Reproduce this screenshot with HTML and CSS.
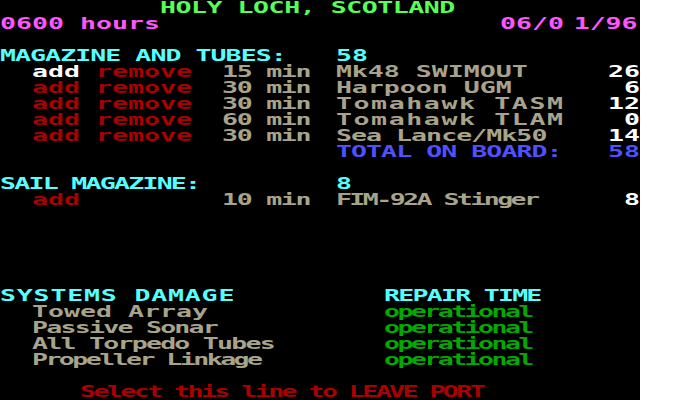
FILE: index.html
```html
<!DOCTYPE html>
<html>
<head>
<meta charset="utf-8">
<link rel="stylesheet" href="styles.css">
</head>
<body>
<div class="screen">
  <div class="text">
    <div class="row title-row"><span class="c-green">HOLY LOCH, SCOTLAND</span></div>
    <div class="row split">
      <span class="c-magenta">0600 hours</span>
      <span class="c-magenta">06/0<span class="gap">1</span>/96</span>
    </div>

    <section class="block">
      <div class="row head21"><span class="c-cyan mag">MAGAZINE AND TUBES:</span><span class="c-cyan">58</span></div>
      <div class="row inv"><span></span><span class="c-white">add</span><span class="c-red">remove</span><span class="c-khaki time">15 min</span><span class="c-khaki item">Mk48 SWIMOUT</span><span class="c-white num">26</span></div>
      <div class="row inv"><span></span><span class="c-red">add</span><span class="c-red">remove</span><span class="c-khaki time">30 min</span><span class="c-khaki item">Harpoon UGM</span><span class="c-white num">6</span></div>
      <div class="row inv"><span></span><span class="c-red">add</span><span class="c-red">remove</span><span class="c-khaki time">30 min</span><span class="c-khaki item loose">Tomahawk TASM</span><span class="c-white num">12</span></div>
      <div class="row inv"><span></span><span class="c-red">add</span><span class="c-red">remove</span><span class="c-khaki time">60 min</span><span class="c-khaki item loose">Tomahawk TLAM</span><span class="c-white num">0</span></div>
      <div class="row inv"><span></span><span class="c-red">add</span><span class="c-red">remove</span><span class="c-khaki time">30 min</span><span class="c-khaki item mag">Sea Lance/Mk50</span><span class="c-white num">14</span></div>
      <div class="row total"><span class="c-blue mag">TOTAL ON BOARD:</span><span class="c-blue num">58</span></div>
    </section>

    <section class="block">
      <div class="row head21"><span class="c-cyan snug">SAIL MAGAZINE:</span><span class="c-cyan">8</span></div>
      <div class="row inv"><span></span><span class="c-red">add</span><span></span><span class="c-khaki time">10 min</span><span class="c-khaki item tight">FIM-92A Stinger</span><span class="c-white num">8</span></div>
    </section>

    <section class="block systems">
      <div class="row head24"><span class="c-cyan wide">SYSTEMS DAMAGE</span><span class="c-cyan snug">REPAIR TIME</span></div>
      <div class="row sys"><span class="c-khaki">Towed Array</span><span class="c-opgreen tight">operational</span></div>
      <div class="row sys"><span class="c-khaki snug">Passive Sonar</span><span class="c-opgreen tight">operational</span></div>
      <div class="row sys"><span class="c-khaki snug">All Torpedo Tubes</span><span class="c-opgreen tight">operational</span></div>
      <div class="row sys"><span class="c-khaki tight">Propeller Linkage</span><span class="c-opgreen tight">operational</span></div>
    </section>

    <div class="row leave"><span class="c-red tight">Select this line to LEAVE PORT</span></div>
  </div>
</div>
</body>
</html>
```

FILE: styles.css
```css
html, body {
  margin: 0;
  padding: 0;
  background: #ffffff;
}

.screen {
  width: 640px;
  height: 400px;
  background: #000000;
  overflow: hidden;
}

.text {
  width: 400px;
  height: 400px;
  transform: scaleX(1.6);
  transform-origin: 0 0;
  font-family: "DejaVu Sans Mono", "Liberation Mono", monospace;
  font-weight: bold;
  font-size: 16.61px;
  line-height: 16px;
  white-space: nowrap;
}

.row {
  height: 16px;
}

.title-row {
  padding-left: 10ch;
  letter-spacing: -0.03ch;
}

.split {
  display: flex;
  justify-content: space-between;
  padding-right: 0.15ch;
}

.gap {
  padding-left: 0.6ch;
}

.block {
  margin-top: 16px;
}

.systems {
  margin-top: 80px;
}

.head21 {
  display: grid;
  grid-template-columns: 21ch 1fr;
}

.head24 {
  display: grid;
  grid-template-columns: 24ch 1fr;
}

.inv {
  display: grid;
  grid-template-columns: 2ch 4ch 6ch 7.4ch 1fr auto;
}

.total {
  display: grid;
  grid-template-columns: 1fr auto;
  padding-left: 21ch;
}

.time {
  text-align: right;
  letter-spacing: -0.08ch;
}

.inv .item {
  padding-left: 1.6ch;
}

.num {
  text-align: right;
}

.sys {
  display: grid;
  grid-template-columns: 22ch 1fr;
  padding-left: 2ch;
}

.leave {
  margin-top: 16px;
  padding-left: 5ch;
}

.mag { letter-spacing: -0.06ch; }
.tight { letter-spacing: -0.16ch; }
.snug { letter-spacing: -0.11ch; }
.loose { letter-spacing: 0.1ch; }
.wide { letter-spacing: 0.05ch; }

.c-green { color: #55ff55; }
.c-magenta { color: #ff55ff; }
.c-cyan { color: #55ffff; }
.c-white { color: #ffffff; }
.c-red { color: #aa0000; }
.c-khaki { color: #a8a48a; }
.c-blue { color: #5050ff; }
.c-opgreen { color: #00aa00; }
```
